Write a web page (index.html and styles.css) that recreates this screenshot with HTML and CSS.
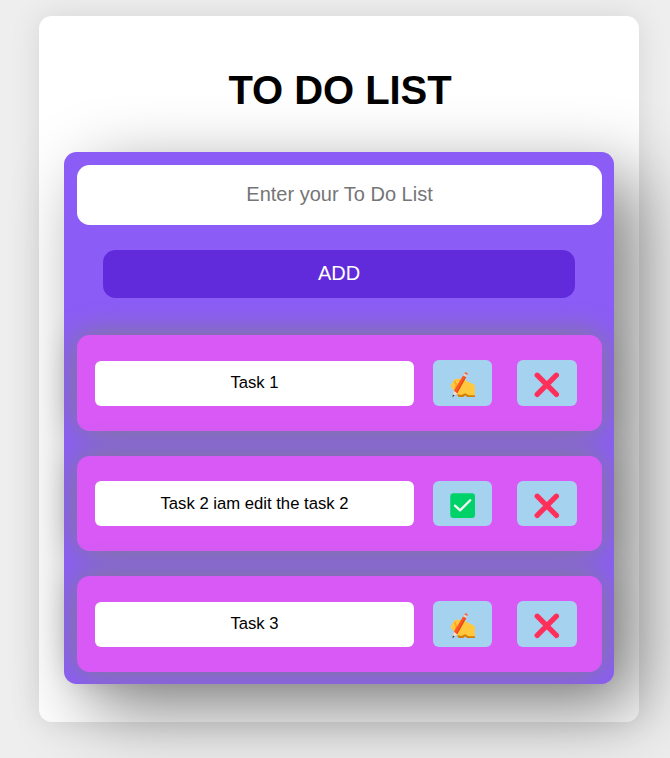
FILE: index.html
```html
<!DOCTYPE html>
<html lang="en">
<head>
<meta charset="utf-8">
<title>To Do List</title>
<link rel="stylesheet" href="styles.css">
</head>
<body>
<svg class="defs" aria-hidden="true">
  <symbol id="write" viewBox="0 0 26 26">
    <path fill="#ffc83d" d="M1.2 12.4 4.2 7.7Q5 6.8 7 6.8L14 7.3 17 9.2 24.8 13V24.2H18L14.5 23 12.8 24.5H9L5 18.4Q1.3 16.7.8 14.5Q.7 13.2 1.2 12.4Z"/>
    <path fill="#d67d00" d="M7.4 22.2 11.4 23 15.2 21.2 18.5 23.2H24.9V24.9H17.2L15.2 23.3 13.2 24.9H8.8Q7.3 24 7.4 22.2Z"/>
    <path fill="#f9a825" d="m5.3 8.2 2.2 5.2-2.3 4.1-.8-.3 1.1-3.8-1.6-3.3Z"/>
    <path fill="#ff5722" d="M13.2 3.3 16.2 5 7.2 21.2 3.8 19.1Z"/>
    <path fill="#e64a19" d="m15.1 4.5 1.1.6-9 16.1-1.1-.7Z"/>
    <path fill="#e0d4d4" d="m14.3 1.5 3 1.6-1.1 2-3-1.7Z"/>
    <path fill="#ff6034" d="M14.3 1.5Q15.2-.2 16.7.5 18.3 1.4 17.3 3.1Z"/>
    <path fill="#ffd9c7" d="m3.8 19.1 3.4 2.1-4.5 3.5Z"/>
    <path fill="#34313b" d="m2.9 22.6 1.8.9-2.2 1.8Z"/>
  </symbol>
  <symbol id="cross" viewBox="0 0 26 26">
    <path fill="none" stroke="#ff2f5b" stroke-width="5.2" stroke-linecap="round" d="M3.2 3.2 22.4 22.4M22.4 3.2 3.2 22.4"/>
  </symbol>
  <symbol id="check" viewBox="0 0 26 26">
    <rect x=".3" y=".3" width="24.7" height="24.7" rx="3" fill="#00d26a"/>
    <path fill="none" stroke="#f4f4f4" stroke-width="2.3" stroke-linecap="round" stroke-linejoin="round" d="m5 12.6 5.1 4.8L20.2 7.3"/>
  </symbol>
</svg>
<main class="card">
  <h1 class="title">TO DO LIST</h1>
  <section class="panel">
    <input class="entry" type="text" placeholder="Enter your To Do List">
    <button class="add">ADD</button>
    <div class="task">
      <input class="text" type="text" value="Task 1" readonly>
      <button class="action" aria-label="Edit"><svg class="icon"><use href="#write"/></svg></button>
      <button class="action" aria-label="Delete"><svg class="icon"><use href="#cross"/></svg></button>
    </div>
    <div class="task">
      <input class="text" type="text" value="Task 2 iam edit the task 2">
      <button class="action" aria-label="Save"><svg class="icon"><use href="#check"/></svg></button>
      <button class="action" aria-label="Delete"><svg class="icon"><use href="#cross"/></svg></button>
    </div>
    <div class="task">
      <input class="text" type="text" value="Task 3" readonly>
      <button class="action" aria-label="Edit"><svg class="icon"><use href="#write"/></svg></button>
      <button class="action" aria-label="Delete"><svg class="icon"><use href="#cross"/></svg></button>
    </div>
  </section>
</main>
</body>
</html>
```
FILE: styles.css
```css
* { box-sizing: border-box; }
html { overflow: hidden; }
body {
  margin: 0;
  height: 758px;
  padding: 16px 0 0 39px;
  overflow: hidden;
  background: #eee;
  font-family: Arial, "Liberation Sans", sans-serif;
}
.defs { display: none; }
.card {
  width: 600px;
  height: 706px;
  padding: 51px 25px 0;
  border-radius: 12.5px;
  background: #fff;
  box-shadow: 0 0 31px rgba(0, 0, 0, .1);
}
.title {
  margin: 0 0 39px;
  padding-left: 2px;
  font-size: 40px;
  line-height: 46px;
  text-align: center;
  letter-spacing: -.05px;
}
.panel {
  display: flex;
  flex-direction: column;
  width: 550px;
  height: 532px;
  padding: 13px 12px 12px 13px;
  border-radius: 12.5px;
  background: #8b5cf6;
  box-shadow: 25px 25px 75px gray;
}
input, button {
  border: 0;
  padding: 0;
  outline: 0;
  font-family: inherit;
  text-align: center;
}
.entry {
  flex: none;
  height: 60px;
  padding-bottom: 1px;
  border-radius: 12.5px;
  background: #fff;
  font-size: 20px;
}
.entry::placeholder { color: #757575; }
.add {
  flex: none;
  height: 48px;
  margin: 25px 27px 37.3px 26px;
  padding-bottom: 1px;
  border-radius: 12.5px;
  background: #612bdc;
  color: #fff;
  font-size: 20px;
}
.task {
  display: flex;
  flex: none;
  align-items: center;
  height: 95.5px;
  margin-bottom: 25px;
  padding: 0 25px 0 18px;
  border-radius: 12.5px;
  background: #d859f6;
  box-shadow: 0 0 31px gray;
}
.text {
  width: 319px;
  height: 45px;
  margin-right: 19px;
  border-radius: 6px;
  background: #fff;
  color: #000;
  font-size: 16.667px;
}
.action {
  display: grid;
  place-items: center;
  width: 59.4px;
  height: 45.5px;
  padding-top: 4px;
  border-radius: 6px;
  background: #a5d2ef;
}
.action + .action { width: 60px; margin-left: 24.6px; }
.icon { width: 26px; height: 26px; }
```
